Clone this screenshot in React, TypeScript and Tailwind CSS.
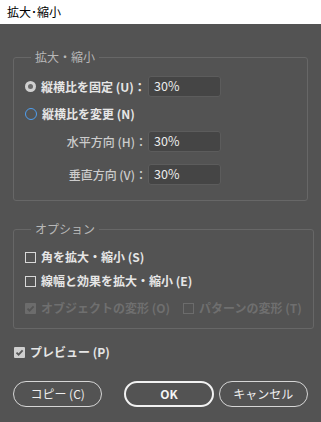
const font = { fontFamily: '"Noto Sans CJK JP", "Noto Sans", sans-serif' };

function Radio({ on }: { on: boolean }) {
  return on ? (
    <span className="w-[11px] h-[11px] rounded-full bg-[#d0d0d0] flex items-center justify-center shrink-0">
      <span className="w-[5px] h-[5px] rounded-full bg-[#6a6a6a]" />
    </span>
  ) : (
    <span className="block w-[12px] h-[12px] rounded-full border-[1.5px] border-[#4f9ff0] shrink-0" />
  );
}

function Check({ checked, disabled }: { checked?: boolean; disabled?: boolean }) {
  if (checked) {
    return (
      <span
        className={
          "w-[11px] h-[11px] rounded-[1px] flex items-center justify-center shrink-0 " +
          (disabled ? "bg-[#6c6c6c]" : "bg-[#cfcfcf]")
        }
      >
        <svg width="9" height="9" viewBox="0 0 9 9">
          <path
            d="M1.5 4.6 L3.6 6.7 L7.6 2.3"
            fill="none"
            stroke={disabled ? "#555" : "#585858"}
            strokeWidth="1.8"
          />
        </svg>
      </span>
    );
  }
  return (
    <span
      className={
        "block w-[11px] h-[11px] border shrink-0 " +
        (disabled ? "border-[#6c6c6c]" : "border-[#d8d8d8]")
      }
    />
  );
}

function Field({ value }: { value: string }) {
  return (
    <div className="w-[73px] h-[21px] bg-[#454545] border border-[#5c5c5c] rounded-[3px] flex items-center pl-[5px] text-[12.5px] text-[#ececec]">
      {value}
    </div>
  );
}

export default function App() {
  return (
    <div className="w-[321px] h-[422px] bg-[#535353] flex flex-col" style={font}>
      <div className="h-[24px] bg-white px-[7px] flex items-center text-[12px] text-black">拡大･縮小</div>

      <div className="px-[13px] flex flex-col">
        {/* Scale group */}
        <fieldset className="mt-[25px] border border-[#676767] rounded-[3px] px-[11px] pt-[11px] pb-[15px]">
          <legend className="ml-[6px] px-[4px] text-[12px] leading-[16px] text-[#b8b8b8]">拡大・縮小</legend>
          <div className="flex items-center h-[21px]">
            <Radio on />
            <span className="ml-[5px] w-[107px] whitespace-nowrap text-[12px] font-bold text-[#e6e6e6]">縦横比を固定 (U)：</span>
            <Field value="30%" />
          </div>
          <div className="flex items-center h-[20px] mt-[7px]">
            <Radio on={false} />
            <span className="ml-[5px] text-[12px] font-bold text-[#e6e6e6]">縦横比を変更 (N)</span>
          </div>
          <div className="flex items-center h-[21px] mt-[7px]">
            <span className="w-[123px] text-right pr-[1px] whitespace-nowrap text-[12px] font-medium text-[#cccccc]">水平方向 (H)：</span>
            <Field value="30%" />
          </div>
          <div className="flex items-center h-[21px] mt-[12px]">
            <span className="w-[123px] text-right pr-[1px] whitespace-nowrap text-[12px] font-medium text-[#cccccc]">垂直方向 (V)：</span>
            <Field value="30%" />
          </div>
        </fieldset>

        {/* Options group */}
        <fieldset className="mt-[20px] border border-[#676767] rounded-[3px] px-[11px] pt-[12px] pb-[12px]">
          <legend className="ml-[6px] px-[4px] text-[12px] leading-[16px] text-[#b8b8b8]">オプション</legend>
          <div className="flex items-center h-[16px] gap-[5px]">
            <Check />
            <span className="text-[12px] font-bold text-[#e6e6e6]">角を拡大・縮小 (S)</span>
          </div>
          <div className="flex items-center h-[16px] gap-[5px] mt-[8px]">
            <Check />
            <span className="text-[12px] font-bold text-[#e6e6e6]">線幅と効果を拡大・縮小 (E)</span>
          </div>
          <div className="flex items-center h-[16px] mt-[11px] whitespace-nowrap">
            <Check checked disabled />
            <span className="ml-[5px] shrink-0 text-[12px] font-bold text-[#6f6f6f]">オブジェクトの変形 (O)</span>
            <span className="ml-[13px] flex shrink-0">
              <Check disabled />
            </span>
            <span className="ml-[5px] shrink-0 text-[12px] font-bold text-[#6f6f6f]">パターンの変形 (T)</span>
          </div>
        </fieldset>

        <div className="flex items-center h-[16px] mt-[15px] pl-[1px] gap-[5px]">
          <Check checked />
          <span className="text-[12px] font-bold text-[#e6e6e6]">プレビュー (P)</span>
        </div>

        <div className="flex mt-[21px]">
          <button className="w-[92px] h-[26px] rounded-full border border-[#d6d6d6] text-[12px] text-[#eeeeee]">
            コピー (C)
          </button>
          <button className="ml-[22px] w-[92px] h-[26px] rounded-full border-2 border-[#f2f2f2] text-[12px] font-bold text-[#f4f4f4]">
            OK
          </button>
          <button className="ml-[5px] w-[92px] h-[26px] rounded-full border border-[#d6d6d6] text-[12px] text-[#eeeeee]">
            キャンセル
          </button>
        </div>
      </div>
    </div>
  );
}
